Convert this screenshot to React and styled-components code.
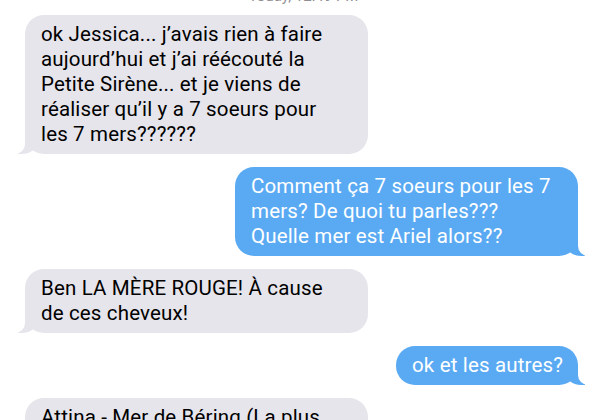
import React from "react";
import styled, { createGlobalStyle, css } from "styled-components";

const Global = createGlobalStyle`
  html, body { margin: 0; padding: 0; background: #ffffff; }
  body { width: 600px; height: 420px; overflow: hidden; }
`;

const Thread = styled.div`
  width: 600px;
  height: 420px;
  overflow: hidden;
  box-sizing: border-box;
  padding: 0 22px 0 25px;
  display: flex;
  flex-direction: column;
  align-items: flex-start;
  gap: 13px;
  font-family: Roboto, "Liberation Sans", sans-serif;
`;

const Stamp = styled.div`
  align-self: stretch;
  margin-top: -12px;
  margin-bottom: -2px;
  text-align: center;
  padding-left: 4px;
  font-size: 15px;
  line-height: 16px;
  color: #8e8e93;
`;

const Bubble = styled.div`
  position: relative;
  box-sizing: border-box;
  padding: 7px 12px 7px 16px;
  border-radius: 19px;
  font-size: 20.5px;
  letter-spacing: 0.15px;
  line-height: 25px;
  white-space: nowrap;
  width: ${(p) => (p.$wide ? "343px" : "auto")};

  &::before,
  &::after {
    content: "";
    position: absolute;
    bottom: 0;
    height: 20px;
  }

  ${(p) =>
    p.$mine
      ? css`
          align-self: flex-end;
          background: #5aaaf3;
          color: #ffffff;
          padding-left: 16px;
          padding-right: 15px;
          &::before {
            right: -7px;
            width: 20px;
            background: #5aaaf3;
            border-bottom-left-radius: 16px 14px;
          }
          &::after {
            right: -26px;
            width: 26px;
            background: #ffffff;
            border-bottom-left-radius: 10px;
          }
        `
      : css`
          background: #e6e5eb;
          color: #000000;
          &::before {
            left: -7px;
            width: 20px;
            background: #e6e5eb;
            border-bottom-right-radius: 16px 14px;
          }
          &::after {
            left: -26px;
            width: 26px;
            background: #ffffff;
            border-bottom-right-radius: 10px;
          }
        `}
`;

const Line = styled.span`
  display: block;
`;

const messages = [
  {
    mine: false,
    wide: true,
    lines: [
      "ok Jessica... j’avais rien à faire",
      "aujourd’hui et j’ai réécouté la",
      "Petite Sirène... et je viens de",
      "réaliser qu’il y a 7 soeurs pour",
      "les 7 mers??????",
    ],
  },
  {
    mine: true,
    wide: true,
    lines: [
      "Comment ça 7 soeurs pour les 7",
      "mers? De quoi tu parles???",
      "Quelle mer est Ariel alors??",
    ],
  },
  {
    mine: false,
    wide: true,
    lines: ["Ben LA MÈRE ROUGE! À cause", "de ces cheveux!"],
  },
  { mine: true, wide: false, lines: ["ok et les autres?"] },
  {
    mine: false,
    wide: true,
    lines: ["Attina - Mer de Béring (La plus", "vieille, elle est brune)"],
  },
];

export default function App() {
  return (
    <>
      <Global />
      <Thread>
        <Stamp>Today, 12:49 PM</Stamp>
        {messages.map((m, i) => (
          <Bubble key={i} $mine={m.mine} $wide={m.wide}>
            {m.lines.map((l, j) => (
              <Line key={j}>{l}</Line>
            ))}
          </Bubble>
        ))}
      </Thread>
    </>
  );
}
